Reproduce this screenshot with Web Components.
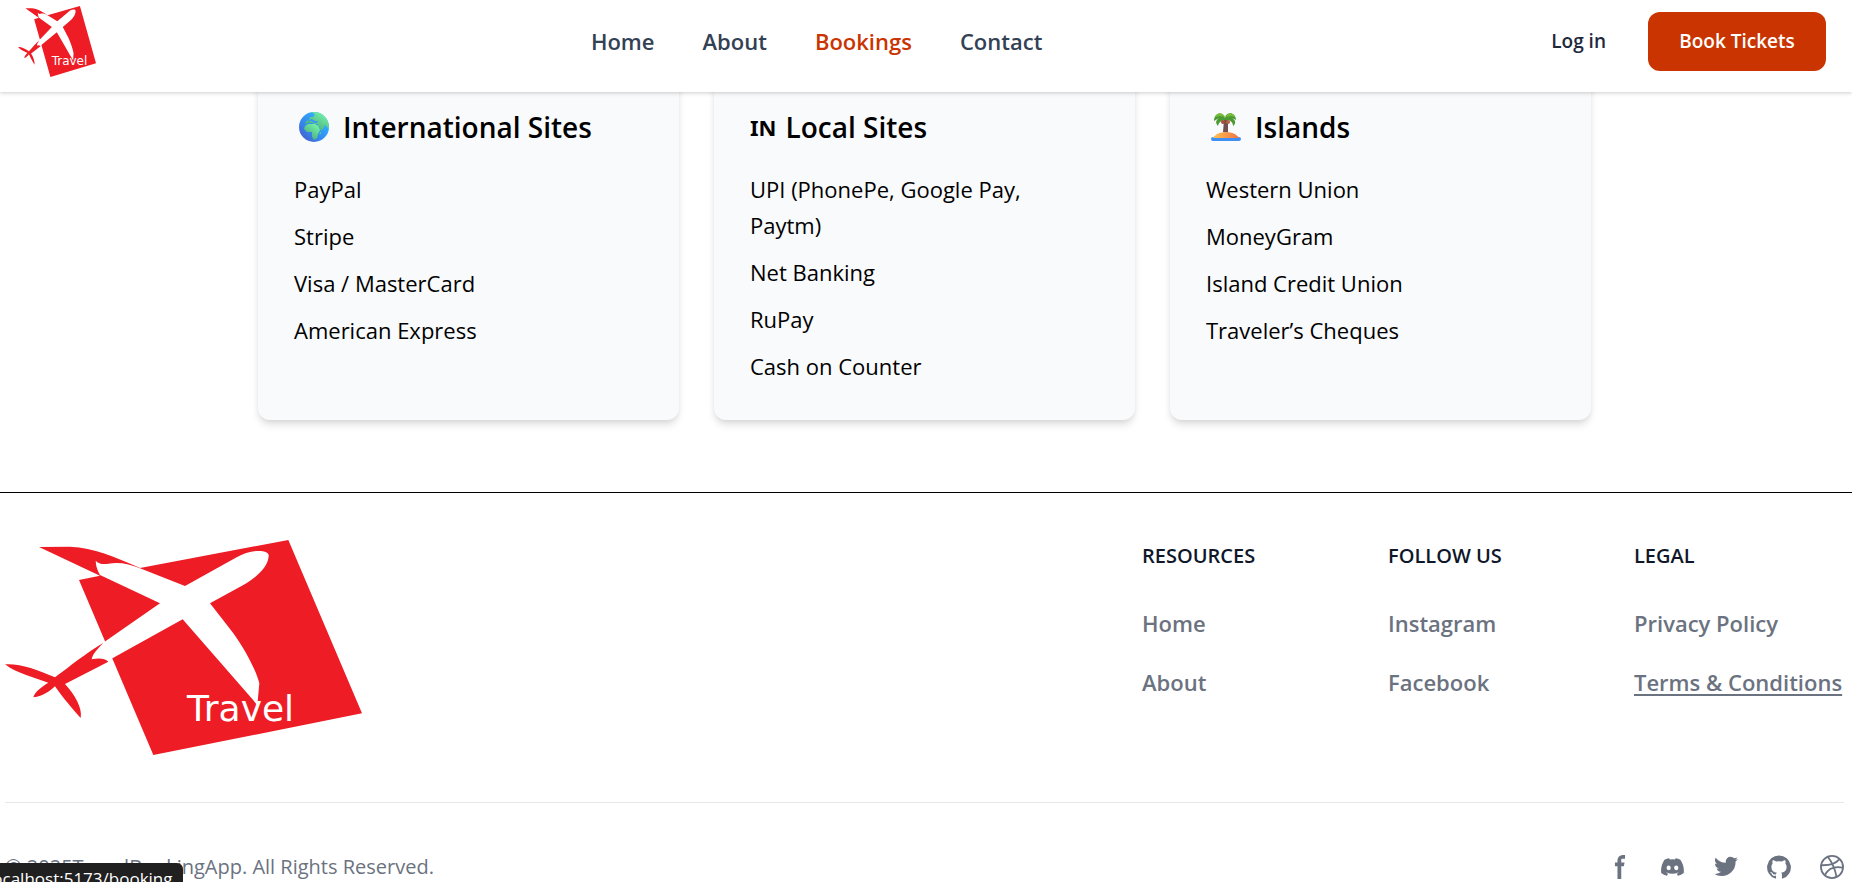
<!DOCTYPE html>
<html lang="en">
<head>
<meta charset="utf-8">
<meta name="viewport" content="width=device-width, initial-scale=1">
<title>Travel Booking App</title>
<style>
  body { margin: 0; background: #fff; color: #000; font: 400 22px/36px "Open Sans", "Noto Sans", sans-serif; }
  main { margin-top: -22px; padding: 0 3px 0 0; }
</style>
</head>
<body>
<site-header></site-header>
<main>
  <payment-grid>
    <payment-card>
      <emoji-globe slot="icon"></emoji-globe>
      <span slot="title">International Sites</span>
      <pay-item>PayPal</pay-item>
      <pay-item>Stripe</pay-item>
      <pay-item>Visa / MasterCard</pay-item>
      <pay-item>American Express</pay-item>
    </payment-card>
    <payment-card>
      <country-code slot="icon">IN</country-code>
      <span slot="title">Local Sites</span>
      <pay-item>UPI (PhonePe, Google Pay, Paytm)</pay-item>
      <pay-item>Net Banking</pay-item>
      <pay-item>RuPay</pay-item>
      <pay-item>Cash on Counter</pay-item>
    </payment-card>
    <payment-card>
      <emoji-island slot="icon"></emoji-island>
      <span slot="title">Islands</span>
      <pay-item>Western Union</pay-item>
      <pay-item>MoneyGram</pay-item>
      <pay-item>Island Credit Union</pay-item>
      <pay-item>Traveler’s Cheques</pay-item>
    </payment-card>
  </payment-grid>
</main>
<site-footer></site-footer>
<link-status>localhost:5173/booking</link-status>

<script>
const define = (name, html) => {
  const template = document.createElement('template');
  template.innerHTML = html;
  customElements.define(name, class extends HTMLElement {
    constructor() {
      super();
      this.attachShadow({ mode: 'open' }).append(template.content.cloneNode(true));
    }
  });
};

define('travel-logo', `
  <style>
    :host { display: block; position: relative; width: var(--logo-width, 357px); height: var(--logo-height, 215px); }
    svg { display: block; width: 100%; height: 100%; }
    span { position: absolute; left: 40%; right: 8%; bottom: 13%; text-align: center;
      font: 400 var(--logo-text, 36px)/1 "DejaVu Sans", sans-serif; height: 1em; color: #fff; }
  </style>
  <svg viewBox="15 60 1071 645" preserveAspectRatio="none" aria-hidden="true">
    <path fill="#ee1c25" d="M865 60 1086 580 460 705 237 180 300 167 117 81 210 80C284 84 340 108 420 144Z"/>
    <path fill="#fff" d="M287 122Q300 136 325 131C355 125 390 131 420 145L555 198 710 112C745 90 800 86 806 104C808 135 775 170 730 195L630 250 700 340C735 388 770 455 778 490L772 556 760 541 548 298 340 413 318 425Q300 412 275 418C278 398 295 382 316 364L480 250 300 165Q288 145 287 122Z"/>
    <path fill="#ee1c25" d="M310 368C260 398 210 438 165 472C110 448 60 430 15 433C50 460 100 472 145 488C125 500 105 515 100 532C130 530 150 512 165 499C190 535 220 570 242 594C248 565 225 525 195 492L325 425Q310 411 275 418C278 400 295 385 310 368Z"/>
  </svg>
  <span>Travel</span>`);

define('nav-link', `
  <style>
    :host { display: block; color: #334155; font-weight: 600; }
    :host([current]) { color: #c93400; }
    a { color: inherit; text-decoration: none; }
  </style>
  <a href="#"><slot></slot></a>`);

define('site-header', `
  <style>
    :host { display: block; position: sticky; top: 0; z-index: 10; background: #fff;
      box-shadow: 0 1px 4px rgba(0,0,0,.2); }
    header { display: flex; align-items: center; justify-content: space-between; height: 72px; padding: 5px 26px 15px 18px; }
    travel-logo { --logo-width: 78px; --logo-height: 71px; --logo-text: 12px; }
    nav { display: flex; gap: 48px; }
    .actions { display: flex; align-items: center; gap: 28px; font-size: 19px; font-weight: 600; }
    .login { padding: 0 14px; color: #1e293b; text-decoration: none; }
    button { border: 0; border-radius: 12px; background: #c93400; color: #fff; font: inherit;
      line-height: 35px; padding: 12px 24px; min-width: 178px; }
  </style>
  <header>
    <travel-logo></travel-logo>
    <nav>
      <nav-link>Home</nav-link><nav-link>About</nav-link><nav-link current>Bookings</nav-link><nav-link>Contact</nav-link>
    </nav>
    <div class="actions">
      <a class="login" href="#">Log in</a>
      <button type="button">Book Tickets</button>
    </div>
  </header>`);

define('payment-grid', `
  <style>
    :host { display: grid; grid-template-columns: repeat(3, minmax(0, 1fr)); gap: 35px; max-width: 1333px; margin: 0 auto; }
  </style>
  <slot></slot>`);

define('payment-card', `
  <style>
    :host { display: block; background: #f9fafc; border-radius: 12px; padding: 36px;
      box-shadow: 0 6px 9px -1px rgba(0,0,0,.1), 0 3px 6px -2px rgba(0,0,0,.1); }
    h2 { display: flex; align-items: center; gap: 9px; margin: 0 0 23px; font-size: 28px; line-height: 42px; font-weight: 600; }
    .items { display: flex; flex-direction: column; gap: 11px; padding-right: 24px; }
  </style>
  <h2><slot name="icon"></slot><slot name="title"></slot></h2>
  <div class="items" role="list"><slot></slot></div>`);

define('pay-item', `
  <style>:host { display: block; }</style>
  <slot></slot>`);

define('country-code', `
  <style>:host { display: block; font: 700 22px/42px "Noto Sans", sans-serif; }</style>
  <slot></slot>`);

define('emoji-globe', `
  <style>:host { display: block; padding: 0 5px; } svg { display: block; width: 30px; height: 30px; }</style>
  <svg viewBox="0 0 30 30" role="img" aria-label="Globe">
    <defs>
      <linearGradient id="sea" x1="1" y1="0" x2="0" y2="1"><stop offset=".2" stop-color="#2fb4ff"/><stop offset=".6" stop-color="#3488ee"/><stop offset="1" stop-color="#4a50c0"/></linearGradient>
      <linearGradient id="land" x1="1" y1="0" x2=".2" y2="1"><stop offset="0" stop-color="#7dffb0"/><stop offset="1" stop-color="#43a076"/></linearGradient>
      <clipPath id="disc"><circle cx="15" cy="15" r="15"/></clipPath>
    </defs>
    <circle cx="15" cy="15" r="15" fill="url(#sea)"/>
    <g clip-path="url(#disc)" fill="url(#land)">
      <path d="M13 0 16 3 14 5 11 5 10 8 7 9 6 12 10 11 13 11 15 12 18 12 19 14 22 19 24 17 26 13 30 17 30 0Z"/>
      <path d="M6 14 9 12 12 12 16 12 19 14 21 18 19 22 18 26 15 28 13 25 13 20 8 20 5 17Z"/>
      <path d="M21 20 22 21 21 23 20 23Z"/>
    </g>
    <path fill="#3b9af0" d="M10 8 13 7 16 9 19 9 18 11 15 11 12 9 9 10Z"/>
  </svg>`);

define('emoji-island', `
  <style>:host { display: block; padding: 0 5px; } svg { display: block; width: 30px; height: 30px; }</style>
  <svg viewBox="0 0 30 30" role="img" aria-label="Island">
    <defs><linearGradient id="sand" x1="0" x2="1"><stop offset="0" stop-color="#ffc14f"/><stop offset="1" stop-color="#ed7348"/></linearGradient></defs>
    <rect x="0" y="25" width="30" height="4" rx="2" fill="#3f8ff5"/>
    <path fill="url(#sand)" d="M2 26C7 18 23 18 28 26Z"/>
    <path fill="#70504f" d="M13 8 17 8 17 20 12 20Z"/>
    <path fill="#4b9a32" d="M14 6C15 -1 25 0 25 8L21 6C25 8 25 12 22 14C22 9 18 8 15 8C12 8 8 9 7 14C4 11 5 8 8 6L3 9C3 0 12 -1 14 6Z"/>
    <path fill="#78bd3a" d="M14 5C12 0 6 0 4 5L9 4ZM15 5C17 0 22 0 24 5L20 4Z"/>
    <circle cx="12" cy="10" r="2" fill="#a54f35"/><circle cx="17" cy="10" r="2" fill="#b86040"/>
  </svg>`);

define('footer-column', `
  <style>
    :host { display: block; min-width: 210px; }
    h2 { margin: 0 0 34px; color: #0f172a; font-size: 20px; line-height: 31px; font-weight: 600; text-transform: uppercase; }
    .links { display: flex; flex-direction: column; gap: 23px; }
  </style>
  <h2><slot name="title"></slot></h2>
  <div class="links"><slot></slot></div>`);

define('footer-link', `
  <style>
    :host { display: block; color: #6b7280; font-weight: 600; white-space: nowrap; }
    a { color: inherit; text-decoration: none; }
    :host([active]) a { text-decoration: underline; text-decoration-thickness: 2px; text-underline-offset: 3px; }
  </style>
  <a href="#"><slot></slot></a>`);

define('social-links', `
  <style>
    :host { display: flex; gap: 29px; color: #6b7280; }
    a { display: block; color: inherit; }
    svg { display: block; width: 24px; height: 24px; fill: currentColor; }
  </style>
  <a href="#" aria-label="Facebook"><svg viewBox="0 0 8 19"><path fill-rule="evenodd" d="M6.135 3H8V0H6.135a4.147 4.147 0 0 0-4.142 4.142V6H0v3h2v9.938h3V9h2.021l.592-3H5V3.591A.6.6 0 0 1 5.592 3h.543Z"/></svg></a>
  <a href="#" aria-label="Discord"><svg viewBox="0 0 21 16"><path d="M16.942 1.556a16.3 16.3 0 0 0-4.126-1.3 12.04 12.04 0 0 0-.529 1.1 15.175 15.175 0 0 0-4.573 0 11.585 11.585 0 0 0-.535-1.1 16.274 16.274 0 0 0-4.129 1.3A17.392 17.392 0 0 0 .182 13.218a15.785 15.785 0 0 0 4.963 2.521c.41-.564.773-1.16 1.084-1.785a10.63 10.63 0 0 1-1.706-.83c.143-.106.283-.217.418-.33a11.664 11.664 0 0 0 10.118 0c.137.113.277.224.418.33-.544.328-1.116.606-1.71.832a12.52 12.52 0 0 0 1.084 1.785 16.46 16.46 0 0 0 5.064-2.595 17.286 17.286 0 0 0-2.973-11.59ZM6.678 10.813a1.941 1.941 0 0 1-1.8-2.045 1.93 1.93 0 0 1 1.8-2.047 1.919 1.919 0 0 1 1.8 2.047 1.93 1.93 0 0 1-1.8 2.045Zm6.644 0a1.94 1.94 0 0 1-1.8-2.045 1.93 1.93 0 0 1 1.8-2.047 1.918 1.918 0 0 1 1.8 2.047 1.93 1.93 0 0 1-1.8 2.045Z"/></svg></a>
  <a href="#" aria-label="Twitter"><svg viewBox="0 0 20 17"><path fill-rule="evenodd" d="M20 1.892a8.178 8.178 0 0 1-2.355.635 4.074 4.074 0 0 0 1.8-2.235 8.344 8.344 0 0 1-2.605.98A4.13 4.13 0 0 0 13.85 0a4.068 4.068 0 0 0-4.1 4.038 4 4 0 0 0 .105.919A11.705 11.705 0 0 1 1.4.734a4.006 4.006 0 0 0 1.268 5.392 4.165 4.165 0 0 1-1.859-.5v.05A4.057 4.057 0 0 0 4.1 9.635a4.19 4.19 0 0 1-1.856.07 4.108 4.108 0 0 0 3.831 2.807A8.36 8.36 0 0 1 0 14.184 11.732 11.732 0 0 0 6.291 16 11.502 11.502 0 0 0 17.964 4.5c0-.177 0-.35-.012-.523A8.143 8.143 0 0 0 20 1.892Z"/></svg></a>
  <a href="#" aria-label="GitHub"><svg viewBox="0 0 20 20"><path fill-rule="evenodd" d="M10 .333A9.911 9.911 0 0 0 6.866 19.65c.5.092.678-.215.678-.477 0-.237-.01-1.017-.014-1.845-2.757.6-3.338-1.169-3.338-1.169a2.627 2.627 0 0 0-1.1-1.451c-.9-.615.07-.6.07-.6a2.084 2.084 0 0 1 1.518 1.021 2.11 2.11 0 0 0 2.884.823c.044-.503.268-.973.63-1.325-2.2-.25-4.516-1.1-4.516-4.9A3.832 3.832 0 0 1 4.7 7.068a3.56 3.56 0 0 1 .095-2.623s.832-.266 2.726 1.016a9.409 9.409 0 0 1 4.962 0c1.89-1.282 2.717-1.016 2.717-1.016.366.83.402 1.768.1 2.623a3.827 3.827 0 0 1 1.02 2.659c0 3.807-2.319 4.644-4.525 4.889a2.366 2.366 0 0 1 .673 1.834c0 1.326-.012 2.394-.012 2.72 0 .263.18.572.681.475A9.911 9.911 0 0 0 10 .333Z"/></svg></a>
  <a href="#" aria-label="Dribbble"><svg viewBox="0 0 20 20"><g fill="none" stroke="currentColor" stroke-width="1.5"><circle cx="10" cy="10" r="9.200"/><path d="M6.5 1.500C10 6 12.500 11 13.800 18.500M1 8.500C8 8.800 13 7.200 16.300 3.400M4 16.700C7 11 12.500 9.200 19 10.500"/></g></svg></a>`);

define('site-footer', `
  <style>
    :host { display: block; margin-top: 72px; border-top: 1px solid #000; }
    footer { padding: 47px 8px 0 5px; }
    .top { display: flex; justify-content: space-between; align-items: flex-start; padding-bottom: 47px; border-bottom: 1px solid #e5e7eb; }
    .columns { display: grid; grid-template-columns: repeat(3, auto); gap: 36px; }
    .bottom { display: flex; justify-content: space-between; align-items: center; padding-top: 46px; color: #6b7280; font-size: 20px; }
  </style>
  <footer>
    <div class="top">
      <travel-logo></travel-logo>
      <div class="columns">
        <footer-column><span slot="title">Resources</span><footer-link>Home</footer-link><footer-link>About</footer-link></footer-column>
        <footer-column><span slot="title">Follow us</span><footer-link>Instagram</footer-link><footer-link>Facebook</footer-link></footer-column>
        <footer-column><span slot="title">Legal</span><footer-link>Privacy Policy</footer-link><footer-link active>Terms &amp; Conditions</footer-link></footer-column>
      </div>
    </div>
    <div class="bottom">
      <span>© 2025TravelBookingApp. All Rights Reserved.</span>
      <social-links></social-links>
    </div>
  </footer>`);

define('link-status', `
  <style>
    :host { display: block; position: fixed; left: -18px; bottom: -13px; z-index: 20; padding: 0 10px 0 6px; border-radius: 0 6px 0 0;
      background: #202020; color: #fff; font-size: 17px; line-height: 32px; white-space: nowrap; }
  </style>
  <slot></slot>`);
</script>
</body>
</html>
